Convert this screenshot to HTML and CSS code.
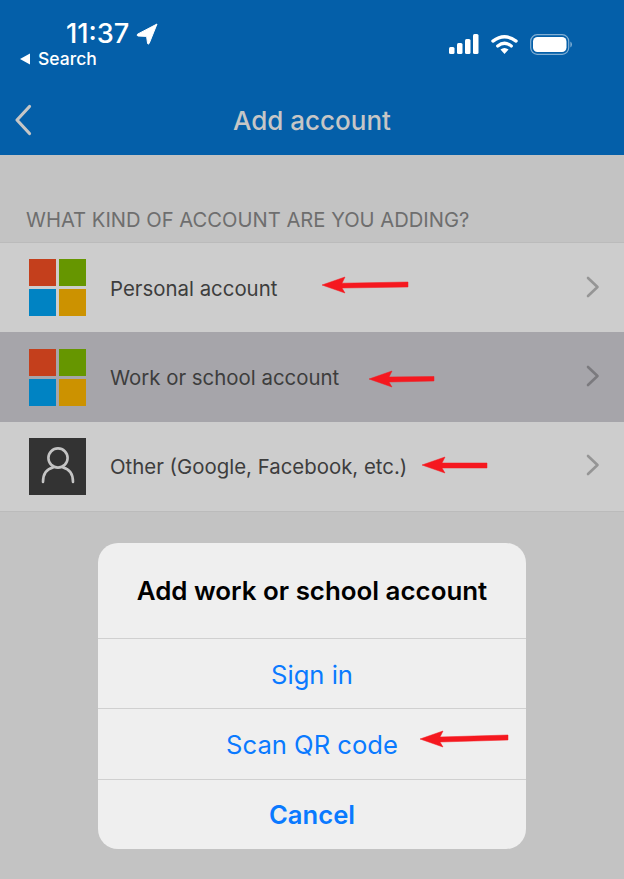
FILE: index.html
```html
<!DOCTYPE html>
<html lang="en">

<head>
    <meta charset="UTF-8">
    <meta name="viewport" content="width=device-width, initial-scale=1.0">
    <title>Add account</title>
    <link rel="stylesheet" href="styles.css">
</head>

<body>
    <header class="cabecera">
        <div class="estado">
            <div class="estado-izq">
                <div class="hora">11:37
                    <svg class="ubicacion" width="22" height="22" viewBox="0 0 22 22">
                        <path d="M21 1 L1.5 11.2 Q0.6 12.6 2 13 L10.6 13.4 L11.6 20.6 Q12.4 21.6 13.2 20.4 Z" fill="#fff" stroke="#fff" stroke-linejoin="round" />
                    </svg>
                </div>
                <div class="volver-app">
                    <svg width="10" height="12" viewBox="0 0 10 12">
                        <path d="M0 6 L10 0.5 V11.5 Z" fill="#fff" />
                    </svg>
                    <span>Search</span>
                </div>
            </div>
            <div class="estado-der">
                <svg width="30" height="20" viewBox="0 0 30 20">
                    <rect x="0" y="13" width="5.5" height="7" rx="1.5" fill="#fff" />
                    <rect x="8" y="9" width="5.5" height="11" rx="1.5" fill="#fff" />
                    <rect x="16" y="5" width="5.5" height="15" rx="1.5" fill="#fff" />
                    <rect x="24" y="0" width="5.5" height="20" rx="1.5" fill="#fff" />
                </svg>
                <svg width="27" height="21" viewBox="0 0 28 21">
                    <path d="M2 7 Q14 -2 26 7" fill="none" stroke="#fff" stroke-width="3.4" stroke-linecap="round" />
                    <path d="M7 12 Q14 6.5 21 12" fill="none" stroke="#fff" stroke-width="3.4" stroke-linecap="round" />
                    <path d="M9.8 15.6 Q14 12.4 18.2 15.6 L14 20.4 Z" fill="#fff" />
                </svg>
                <svg width="42" height="21" viewBox="0 0 42 21">
                    <rect x="0.7" y="0.7" width="38" height="19.6" rx="6.5" fill="none" stroke="#fff" stroke-opacity="0.5" stroke-width="1.2" />
                    <rect x="3" y="3" width="33.5" height="15" rx="4.5" fill="#fff" />
                    <path d="M40.4 7.5 Q42 8.5 42 10.5 Q42 12.5 40.4 13.5 Z" fill="#fff" fill-opacity="0.5" />
                </svg>
            </div>
        </div>
        <nav class="barra">
            <svg class="atras" width="18" height="32" viewBox="0 0 18 32">
                <path d="M15.5 2.5 L3 16 L15.5 29.5" fill="none" stroke="#c6c6c6" stroke-width="3.2" stroke-linecap="round" stroke-linejoin="round" />
            </svg>
            <h1>Add account</h1>
        </nav>
    </header>

    <h2 class="seccion">WHAT KIND OF ACCOUNT ARE YOU ADDING?</h2>

    <ul class="lista">
        <li class="fila">
            <div class="logo"><i class="rojo"></i><i class="verde"></i><i class="azul"></i><i class="amarillo"></i></div>
            <span class="nombre">Personal account</span>
            <svg class="flecha" width="14" height="22" viewBox="0 0 14 22"><path d="M2 2 L11.5 11 L2 20" fill="none" stroke="#959595" stroke-width="2.6" stroke-linecap="round" stroke-linejoin="round" /></svg>
        </li>
        <li class="fila activa">
            <div class="logo"><i class="rojo"></i><i class="verde"></i><i class="azul"></i><i class="amarillo"></i></div>
            <span class="nombre">Work or school account</span>
            <svg class="flecha" width="14" height="22" viewBox="0 0 14 22"><path d="M2 2 L11.5 11 L2 20" fill="none" stroke="#7b7a7e" stroke-width="2.6" stroke-linecap="round" stroke-linejoin="round" /></svg>
        </li>
        <li class="fila">
            <div class="logo-otro">
                <svg width="34" height="38" viewBox="0 0 34 38">
                    <circle cx="17" cy="12" r="9.6" fill="none" stroke="#c4c4c4" stroke-width="2.6" />
                    <path d="M2 36 Q2 24 12 21.6 M32 36 Q32 24 22 21.6" fill="none" stroke="#c4c4c4" stroke-width="2.6" stroke-linecap="round" />
                </svg>
            </div>
            <span class="nombre">Other (Google, Facebook, etc.)</span>
            <svg class="flecha" width="14" height="22" viewBox="0 0 14 22"><path d="M2 2 L11.5 11 L2 20" fill="none" stroke="#959595" stroke-width="2.6" stroke-linecap="round" stroke-linejoin="round" /></svg>
        </li>
    </ul>

    <div class="dialogo">
        <div class="dialogo-titulo">Add work or school account</div>
        <button>Sign in</button>
        <button>Scan QR code</button>
        <button class="cancelar">Cancel</button>
    </div>

    <!-- flechas rojas de la captura -->
    <svg class="anotaciones" width="624" height="879" viewBox="0 0 624 879">
        <path d="M322 285 L345 277 L342 283.2 L408 282 L408 287 L342 288 L345 293 Z" />
        <path d="M369 379 L392 371 L389 377 L434 376.5 L434 381 L389 382 L392 387 Z" />
        <path d="M422 465 L445 457 L442 463 L487 463 L487 468 L442 468 L445 473 Z" />
        <path d="M420 739 L443 731 L440 737 L508 735 L508 740 L440 742 L443 747 Z" />
    </svg>
</body>

</html>
```

FILE: styles.css
```css
* {
    box-sizing: border-box;
    margin: 0;
    padding: 0;
    font-family: Inter, "Noto Sans", sans-serif;
}

body {
    position: relative;
    width: 624px;
    height: 879px;
    overflow: hidden;
    background-color: #c3c3c3;
}

.cabecera {
    height: 155px;
    background-color: #045fa9;
}

.estado {
    height: 93px;
    display: flex;
    justify-content: space-between;
    padding: 19px 52px 0 20px;
}

.hora {
    display: flex;
    align-items: center;
    gap: 7px;
    padding-left: 46px;
    color: #fff;
    font-size: 27.2px;
    font-weight: 500;
    line-height: 30px;
}

.volver-app {
    display: flex;
    align-items: center;
    gap: 8px;
    color: #fff;
    font-size: 17.5px;
    font-weight: 500;
    line-height: 20px;
}

.estado-der {
    display: flex;
    align-items: center;
    gap: 12px;
    height: 40px;
    padding-top: 10px;
}

.barra {
    position: relative;
    height: 62px;
    display: flex;
    align-items: center;
    justify-content: center;
    padding-bottom: 8px;
}

.barra h1 {
    color: #c6c6c6;
    font-size: 26px;
    font-weight: 500;
}

.atras {
    position: absolute;
    left: 14px;
    top: 11px;
}

.seccion {
    height: 87px;
    padding: 53px 26px 0;
    color: #6e6e6e;
    font-size: 20.2px;
    font-weight: 400;
    line-height: 24px;
}

.lista {
    list-style: none;
    border-top: 1px solid #bbb;
    border-bottom: 1px solid #bbb;
}

.fila {
    height: 89.4px;
    display: flex;
    align-items: center;
    padding: 0 24px 0 29px;
    background-color: #cdcdcd;
}

.fila.activa {
    background-color: #a6a5aa;
}

.logo {
    width: 57px;
    height: 57px;
    display: grid;
    grid-template-columns: 1fr 1fr;
    gap: 3px;
}

.rojo {
    background-color: #c43f1c;
}

.verde {
    background-color: #669600;
}

.azul {
    background-color: #0083c3;
}

.amarillo {
    background-color: #cc9200;
}

.logo-otro {
    width: 57px;
    height: 57px;
    display: flex;
    align-items: flex-end;
    justify-content: center;
    padding-bottom: 11px;
    background-color: #333;
}

.nombre {
    flex: 1;
    margin-left: 24px;
    padding-top: 1px;
    color: #3d3d3d;
    font-size: 20.4px;
}

.flecha {
    margin-top: -2px;
}

.dialogo {
    position: absolute;
    left: 98px;
    top: 543px;
    width: 428px;
    height: 306px;
    border-radius: 20px;
    background-color: #efefef;
    overflow: hidden;
}

.dialogo-titulo {
    height: 95px;
    padding-top: 30px;
    text-align: center;
    color: #000;
    font-size: 25.9px;
    font-weight: 600;
    line-height: 36px;
}

.dialogo button {
    display: block;
    width: 100%;
    height: 70.3px;
    padding-top: 1px;
    border: none;
    border-top: 1.5px solid #d0d0d0;
    background-color: transparent;
    color: #0a7aff;
    font-size: 25.6px;
}

.dialogo .cancelar {
    font-weight: 600;
}

.anotaciones {
    position: absolute;
    left: 0;
    top: 0;
    fill: #f5181f;
    stroke: #f5181f;
    stroke-width: 0.5;
    stroke-linejoin: round;
}
```
